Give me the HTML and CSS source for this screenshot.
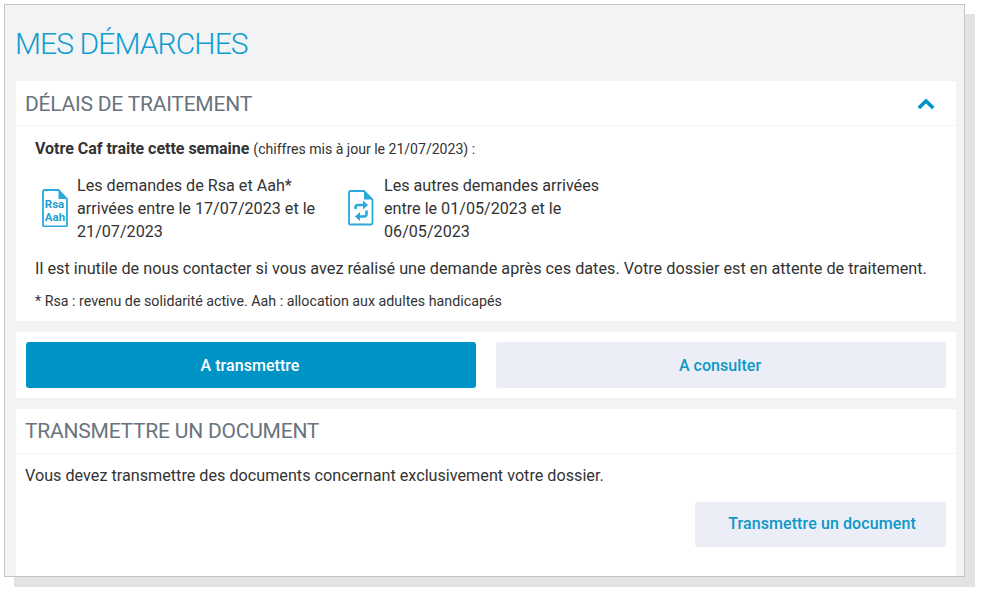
FILE: index.html
```html
<!DOCTYPE html>
<html lang="fr">
<head>
<meta charset="utf-8">
<title>Mes démarches</title>
<link rel="stylesheet" href="styles.css">
</head>
<body>
<main class="frame">
  <h1 class="title">MES DÉMARCHES</h1>
  <section class="card delays">
    <header class="card-head delays-head">
      <h2 class="card-title">DÉLAIS DE TRAITEMENT</h2>
      <svg class="chevron" width="18" height="12" viewBox="0 0 18 12"><path d="M1.800 10 L9 3 L16.200 10" fill="none" stroke="#0094c6" stroke-width="3.6"/></svg>
    </header>
    <div class="delays-body">
      <p class="lead"><strong>Votre Caf traite cette semaine</strong> <span class="lead-note">(chiffres mis à jour le 21/07/2023) :</span></p>
      <div class="items">
        <div class="item item-a">
          <svg class="doc" width="26" height="38" viewBox="0 0 26 38">
            <path d="M2.500 1 H16.500 L25 10 V36 Q25 37.500 23.500 37.500 H2.500 Q1 37.500 1 36 V2.500 Q1 1 2.500 1 Z" fill="none" stroke="#2aa9dc" stroke-width="1.800"/>
            <path d="M16.500 1 V10 H25 Z" fill="#2aa9dc"/>
            <text x="12.500" y="19" class="doc-text">Rsa</text>
            <text x="13" y="32" class="doc-text">Aah</text>
          </svg>
          <p class="item-text">Les demandes de Rsa et Aah* arrivées entre le 17/07/2023 et le 21/07/2023</p>
        </div>
        <div class="item item-b">
          <svg class="doc" width="26" height="36" viewBox="0 0 26 36">
            <path d="M2.500 1 H16 L24.500 9.500 V33 Q24.500 34.500 23 34.500 H2.500 Q1 34.500 1 33 V2.500 Q1 1 2.500 1 Z" fill="none" stroke="#2aa9dc" stroke-width="1.800"/>
            <path d="M16 1 V9.500 H24.500 Z" fill="#2aa9dc"/>
            <path d="M7.500 19 V17.500 Q7.500 15 10 15 H16" fill="none" stroke="#2aa9dc" stroke-width="2.600"/>
            <path d="M15 10.500 L20 15 L15 19.500 Z" fill="#2aa9dc"/>
            <path d="M18.500 20.500 V24 Q18.500 26.500 16 26.500 H11" fill="none" stroke="#2aa9dc" stroke-width="2.600"/>
            <path d="M12 22 L7 26.500 L12 31 Z" fill="#2aa9dc"/>
          </svg>
          <p class="item-text">Les autres demandes arrivées entre le 01/05/2023 et le 06/05/2023</p>
        </div>
      </div>
      <p class="notice">Il est inutile de nous contacter si vous avez réalisé une demande après ces dates. Votre dossier est en attente de traitement.</p>
      <p class="foot">* Rsa : revenu de solidarité active. Aah : allocation aux adultes handicapés</p>
    </div>
  </section>
  <nav class="card tabs">
    <button class="btn btn-primary">A transmettre</button>
    <button class="btn btn-soft">A consulter</button>
  </nav>
  <section class="card send">
    <header class="card-head">
      <h2 class="card-title">TRANSMETTRE UN DOCUMENT</h2>
    </header>
    <div class="send-body">
      <p class="send-text">Vous devez transmettre des documents concernant exclusivement votre dossier.</p>
      <div class="send-actions"><button class="btn btn-soft btn-send">Transmettre un document</button></div>
    </div>
  </section>
</main>
</body>
</html>
```
FILE: styles.css
```css
* { box-sizing: border-box; }
html, body { margin: 0; padding: 0; background: #fff; }
body { padding: 4px 0 0 4px; font-family: Roboto, "Liberation Sans", sans-serif; color: #333; height: 594px; overflow: hidden; }
p, h1, h2 { margin: 0; }
.frame {
  width: 961px; height: 573px;
  background: #f2f3f5;
  border: 1px solid #c4c4c4;
  box-shadow: 10px 10px 0 #e3e3e3;
  padding: 0 8px 0 11px;
  display: flex; flex-direction: column;
  overflow: hidden;
}
.title { font-weight: 300; font-size: 30px; line-height: 36px; color: #0f9ccf; margin-top: 21px; margin-bottom: 19px; margin-left: -1px; letter-spacing: -0.9px; }
.card { background: #fff; }
.card-head { height: 45px; padding: 0 21px 0 9px; border-bottom: 1px solid #f2f3f5; display: flex; align-items: center; justify-content: space-between; }
.delays-head { padding-top: 2px; }
.card-title { font-weight: 400; font-size: 21px; color: #6a737d; letter-spacing: -0.22px; line-height: 1; }
.delays { height: 240px; margin-bottom: 11px; }
.delays-body { padding: 13px 19px 0; font-size: 16.2px; }
.lead { font-size: 16px; line-height: 20px; letter-spacing: -0.02px; }
.lead-note { font-size: 14.1px; }
.items { display: flex; margin-top: 14px; height: 70px; }
.item { display: flex; align-items: center; }
.item-a { width: 307px; padding-left: 7px; gap: 9px; }
.item-b { width: 260px; gap: 10px; padding-left: 6px; }
.item-a .item-text { width: 245px; }
.item-b .item-text { width: 225px; }
.item-text { font-size: 16.15px; line-height: 23px; }
.doc { flex: none; }
.doc-text { font-family: Roboto, sans-serif; font-weight: 700; font-size: 11.500px; fill: #1f9fd3; text-anchor: middle; }
.notice { font-size: 16.24px; line-height: 20px; margin-top: 16px; white-space: nowrap; }
.foot { font-size: 14.25px; line-height: 18px; margin-top: 13px; }
.tabs { height: 66px; padding: 10px; display: flex; gap: 20px; margin-bottom: 11px; }
.btn { border: 0; border-radius: 3px; font: 500 16px Roboto, sans-serif; letter-spacing: 0.05px; height: 45.500px; }
.tabs .btn { flex: 1; padding: 1px 8px 0 6px; }
.btn-primary { background: #0094c6; color: #fff; }
.btn-soft { background: #ebeef6; color: #0c98c9; }
.send { flex: 1; }
.send-body { padding: 12px 10px 12px 9px; }
.send-text { font-size: 16.2px; line-height: 20px; }
.send-actions { display: flex; justify-content: flex-end; margin-top: 16px; }
.btn-send { width: 251px; height: 45px; padding: 0 3px 3px 6px; letter-spacing: 0.1px; }
```
